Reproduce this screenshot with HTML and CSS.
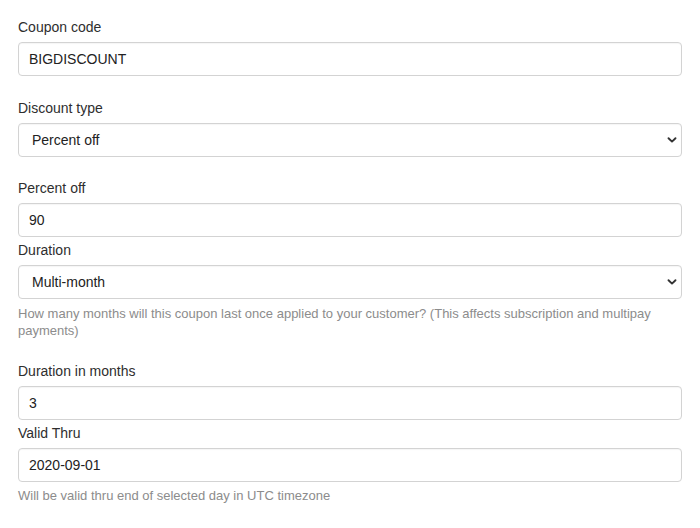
FILE: index.html
```html
<!DOCTYPE html>
<html>
<head>
<meta charset="utf-8">
<link rel="stylesheet" href="styles.css">
</head>
<body>
<form class="form">
  <div class="group spaced">
    <label class="label">Coupon code</label>
    <input class="control" type="text" value="BIGDISCOUNT">
  </div>
  <div class="group spaced">
    <label class="label">Discount type</label>
    <div class="select-wrap">
      <select class="control select"><option>Percent off</option></select>
      <svg class="chevron" width="10" height="8" viewBox="0 0 10 8"><path d="M1.5 2.2 L5 5.6 L8.5 2.2" fill="none" stroke="#333" stroke-width="1.9" stroke-linecap="round" stroke-linejoin="round"/></svg>
    </div>
  </div>
  <div class="group tight">
    <label class="label">Percent off</label>
    <input class="control" type="text" value="90">
  </div>
  <div class="group spaced-help">
    <label class="label">Duration</label>
    <div class="select-wrap">
      <select class="control select"><option>Multi-month</option></select>
      <svg class="chevron" width="10" height="8" viewBox="0 0 10 8"><path d="M1.5 2.2 L5 5.6 L8.5 2.2" fill="none" stroke="#333" stroke-width="1.9" stroke-linecap="round" stroke-linejoin="round"/></svg>
    </div>
    <p class="help">How many months will this coupon last once applied to your customer? (This affects subscription and multipay payments)</p>
  </div>
  <div class="group tight">
    <label class="label">Duration in months</label>
    <input class="control" type="text" value="3">
  </div>
  <div class="group">
    <label class="label">Valid Thru</label>
    <input class="control" type="text" value="2020-09-01">
    <p class="help help-last">Will be valid thru end of selected day in UTC timezone</p>
  </div>
</form>
</body>
</html>
```
FILE: styles.css
```css
html, body {
  margin: 0;
  background: #ffffff;
}
body {
  font-family: "Liberation Sans", Arial, sans-serif;
  font-size: 14px;
  color: #2b2b2b;
}
.form {
  padding: 17px 18px 0 18px;
}
.group.spaced {
  margin-bottom: 21.5px;
}
.group.tight {
  margin-bottom: 3px;
}
.group.spaced-help {
  margin-bottom: 22.5px;
}
.label {
  display: block;
  line-height: 20px;
  margin-bottom: 5px;
  color: #2e2e2e;
}
.control {
  display: block;
  box-sizing: border-box;
  width: 100%;
  height: 34px;
  margin: 0;
  padding: 0 10px;
  border: 1px solid #d3d3d3;
  border-radius: 4px;
  background: #fff;
  font-family: inherit;
  font-size: 14px;
  color: #222;
  box-shadow: inset 0 1px 1px rgba(0,0,0,0.04);
  outline: none;
}
.select-wrap {
  position: relative;
}
.select {
  -webkit-appearance: none;
  appearance: none;
  padding-left: 13px;
}
.chevron {
  position: absolute;
  right: 5px;
  top: 13px;
}
.help {
  margin: 5.5px 0 0 0;
  font-size: 13px;
  line-height: 17px;
  color: #8c8c8c;
}
.help.help-last {
  margin-top: 4.5px;
}
```
